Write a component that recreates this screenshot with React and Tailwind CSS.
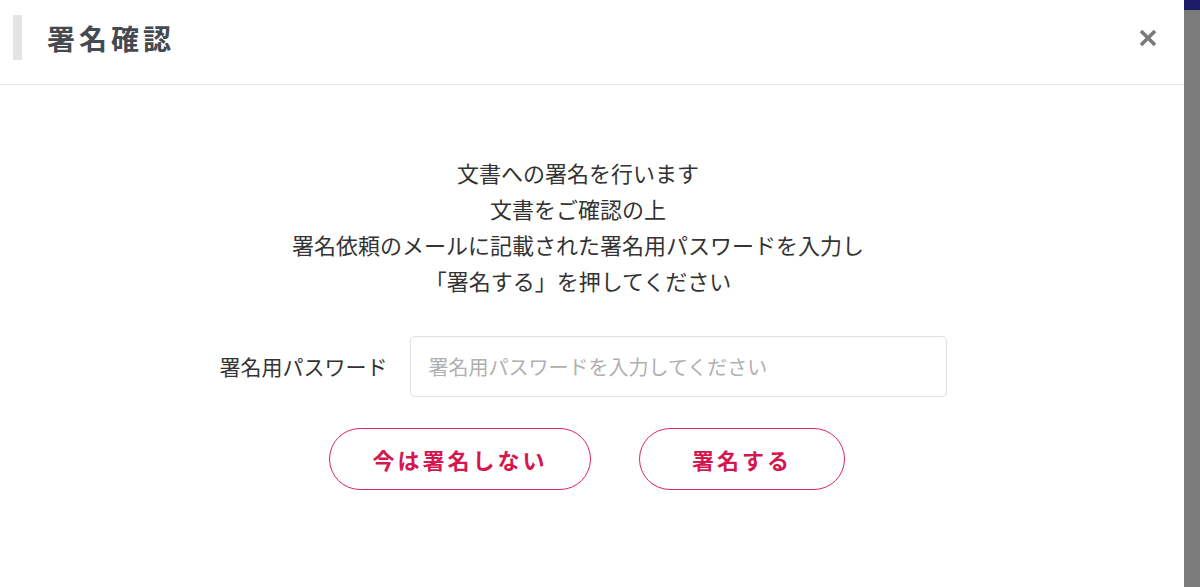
import { useState } from "react";

export default function App() {
  const [password, setPassword] = useState("");

  return (
    <div
      className="flex w-[1200px] h-[587px] overflow-hidden bg-white"
      style={{ fontFamily: '"Noto Sans CJK JP", "Noto Sans", sans-serif' }}
    >
      {/* モーダル本体 */}
      <div className="flex-1 flex flex-col bg-white">
        {/* ヘッダー */}
        <div className="h-[85px] shrink-0 flex items-center border-b border-[#e6e6e6] pl-[13px] pr-[27px]">
          <div className="w-[9px] h-[45px] bg-[#e4e4e6] -mt-[9px]" />
          <h1 className="ml-[25px] -mt-[8px] text-[28px] font-bold tracking-[4px] text-[#454a50]">署名確認</h1>
          <button className="ml-auto -mt-[8px] text-[#7a7a7a]" aria-label="閉じる">
            <svg width="18" height="18" viewBox="0 0 18 18">
              <path d="M2 2 L16 16 M16 2 L2 16" stroke="currentColor" strokeWidth="3.6" strokeLinecap="butt" />
            </svg>
          </button>
        </div>

        {/* 本文 */}
        <div className="flex flex-col items-center pt-[69px] pr-[28px]">
          <div className="text-center text-[22px] leading-[36px] text-[#333]">
            <p>文書への署名を行います</p>
            <p>文書をご確認の上</p>
            <p>署名依頼のメールに記載された署名用パスワードを入力し</p>
            <p>「署名する」を押してください</p>
          </div>

          <div className="flex items-center mt-[38px] gap-[22px] ml-[10px]">
            <label className="text-[21px] text-[#333]">署名用パスワード</label>
            <input
              type="password"
              value={password}
              onChange={(e) => setPassword(e.target.value)}
              placeholder="署名用パスワードを入力してください"
              className="w-[537px] h-[61px] border border-[#e0e0e0] rounded-[5px] px-[18px] text-[20px] text-[#333] placeholder:text-[#b0b0b0] outline-none"
            />
          </div>

          <div className="flex gap-[48px] mt-[31px] ml-[18px]">
            <button className="w-[262px] h-[62px] rounded-full border border-[#e0245e] text-[#d6174f] text-[22px] font-bold tracking-[3px] bg-white">
              今は署名しない
            </button>
            <button className="w-[206px] h-[62px] rounded-full border border-[#e0245e] text-[#d6174f] text-[22px] font-bold tracking-[3px] bg-white">
              署名する
            </button>
          </div>
        </div>
      </div>

      {/* 背景のオーバーレイ */}
      <div className="w-[16px] shrink-0 flex flex-col bg-[#7b7b7b]">
        <div className="h-[10px] bg-[#1c1c66]" />
      </div>
    </div>
  );
}
